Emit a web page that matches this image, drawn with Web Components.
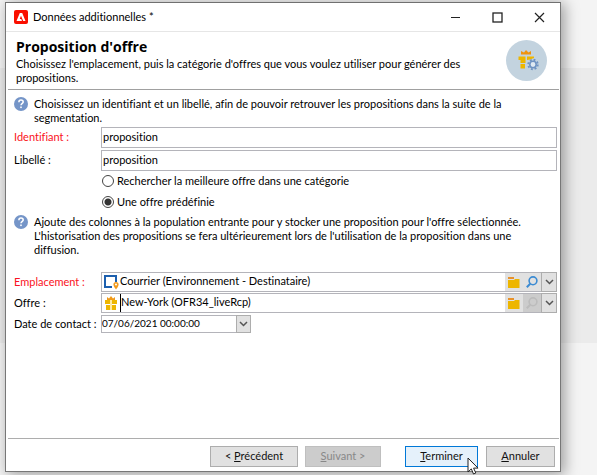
<!DOCTYPE html>
<html lang="fr">
<head>
<meta charset="utf-8">
<title>Données additionnelles</title>
<style>
html,body{margin:0;height:100%}
body{box-sizing:border-box;padding:2px 36px 3px 5px;overflow:hidden;font:11px/14px Lato,"Open Sans",sans-serif;font-variant-ligatures:none;color:#000;
background:linear-gradient(#f4f4f4 68px,#ebebeb 68px,#ebebeb 343px,#f4f4f4 343px)}
</style>
</head>
<body>
<app-window>
  <title-bar slot="bar">Données additionnelles *</title-bar>
  <page-header slot="header" heading="Proposition d'offre">Choisissez l'emplacement, puis la catégorie d'offres que vous voulez utiliser pour générer des<br>propositions.</page-header>
  <help-note>Choisissez un identifiant et un libellé, afin de pouvoir retrouver les propositions dans la suite de la<br>segmentation.</help-note>
  <text-field label="Identifiant :" value="proposition" required></text-field>
  <text-field label="Libellé :" value="proposition"></text-field>
  <offer-choice></offer-choice>
  <help-note class="second">Ajoute des colonnes à la population entrante pour y stocker une proposition pour l'offre sélectionnée.<br>L'historisation des propositions se fera ultérieurement lors de l'utilisation de la proposition dans une<br>diffusion.</help-note>
  <lookup-field label="Emplacement :" value="Courrier (Environnement - Destinataire)" required>
    <svg slot="icon" width="16" height="16" viewBox="0 0 16 16"><path d="M9 13H2V2h11v6" fill="none" stroke="#1c5fae" stroke-width="2"/><path d="M13 8a2.600 2.600 0 0 0-2.600 2.600C10.400 12.500 13 15.500 13 15.500s2.600-3 2.600-4.900A2.600 2.600 0 0 0 13 8Z" fill="#f39a1c"/><circle cx="13" cy="10.500" r="1" fill="#fff"/></svg>
  </lookup-field>
  <lookup-field label="Offre :" value="New-York (OFR34_liveRcp)" nosearch caret>
    <svg slot="icon" width="16" height="16" viewBox="0 0 16 16"><path d="M4 5V2l2 1.500L8 1l2 2.500L12 2v3Z" fill="#f09a1a"/><path d="M2 5h5v4H2ZM9 5h5v4H9ZM3 10h4v5H3ZM9 10h4v5H9Z" fill="#edb600"/><path d="M7 5h2v10H7Z" fill="#ffe9a0"/></svg>
  </lookup-field>
  <date-field label="Date de contact :" value="07/06/2021 00:00:00"></date-field>
  <wizard-buttons slot="footer"></wizard-buttons>
</app-window>

<script>
const define = (name, html, setup) => customElements.define(name, class extends HTMLElement {
  connectedCallback() {
    if (this.shadowRoot) return;
    const t = document.createElement('template');
    t.innerHTML = html;
    this.attachShadow({mode: 'open'}).append(t.content.cloneNode(true));
    if (setup) setup(this, this.shadowRoot);
  }
});
const chevron = '<svg width="9" height="6" viewBox="0 0 9 6"><path d="M1 1l3.500 3.500L8 1" fill="none" stroke="#555" stroke-width="1.500"/></svg>';
const fieldCss = `
:host{display:grid;grid-template-columns:87px 1fr;align-items:center}
:host([required]) label{color:#fa1222}
label{white-space:nowrap}
input{font:inherit;font-variant-ligatures:none;color:inherit;border:0;outline:0;background:none;padding:0;margin:0;min-width:0}
button{font:inherit;padding:0;margin:0;border:0;background:#e1e1e1;display:grid;place-items:center}
.drop{width:15px;border:1px solid #adadad;box-sizing:border-box}`;
const fillField = (el, r) => {
  r.querySelector('label').textContent = el.getAttribute('label');
  r.querySelector('input').setAttribute('value', el.getAttribute('value'));
};

define('app-window', `<style>
:host{display:flex;flex-direction:column;box-sizing:border-box;height:100%;border:1px solid #777;border-top-color:#707070;background:#fff;box-shadow:3px 2px 13px 1px rgba(0,0,0,.34)}
main{flex:1;display:flex;flex-direction:column;padding:7px 3px 0 8px;min-height:0}
::slotted(text-field){margin-bottom:2px}
::slotted(lookup-field){margin-bottom:1px}
::slotted(date-field){margin-top:1px}
::slotted(.second){margin-bottom:13px}
</style><slot name="bar"></slot><slot name="header"></slot><main><slot></slot></main><slot name="footer"></slot>`);

define('title-bar', `<style>
:host{display:flex;align-items:center;height:28px;padding:0 0 0 8px;border-bottom:1px solid #e6e6e6}
h2{font:inherit;font-variant-ligatures:none;margin:0 0 0 5px;flex:1}
button{width:42px;height:26px;padding:0;border:0;background:none;display:grid;place-items:center}
svg{display:block}
</style>
<svg width="14" height="14" viewBox="0 0 14 14"><rect width="14" height="14" rx="2" fill="#fa0f00"/><path d="M5.800 3h2.400L11.500 11H9.200L7 5.700 5.700 8.900h1.500L8 11H2.500Z" fill="#fff"/></svg>
<h2><slot></slot></h2>
<button aria-label="Réduire"><svg width="11" height="11"><path d="M1 5.500h9" stroke="#222"/></svg></button>
<button aria-label="Agrandir"><svg width="11" height="11"><rect x="1" y="1" width="9" height="9" fill="none" stroke="#222" stroke-width="1.300"/></svg></button>
<button aria-label="Fermer"><svg width="11" height="11"><path d="M1 1l9 9M10 1L1 10" stroke="#222" stroke-width="1.200"/></svg></button>`);

define('page-header', `<style>
:host{display:flex;align-items:center;box-sizing:border-box;height:58px;margin:0 1px 0 2px;padding:0 12px 0 8px;border-bottom:1px solid #a0a0a0}
div{flex:1;white-space:nowrap}
h1{font:700 14px/20px "Open Sans",sans-serif;margin:0;color:#000}
p{margin:0}
</style>
<div><h1></h1><p><slot></slot></p></div>
<svg width="41" height="41" viewBox="0 0 41 41"><circle cx="20.500" cy="20.500" r="20.500" fill="#c3d3df"/>
<path d="M15 14.500V11l3 1.500L20 10l2.500 2.500L25 11v3.500Z" fill="#f0930f"/>
<path d="M12.500 16.500h7V19v4h-5v-3h-2ZM14.500 24H19v4.500h-4.500ZM21 16.500h7V18l-4 1.500L21 20Z" fill="#edb600"/>
<circle cx="27" cy="24.500" r="4.800" fill="none" stroke="#6f93c2" stroke-width="1.800" stroke-dasharray="1.900 1.870"/><circle cx="27" cy="24.500" r="3.200" fill="#dfe9f2" stroke="#6f93c2" stroke-width="1.600"/></svg>`,
(el, r) => r.querySelector('h1').textContent = el.getAttribute('heading'));

define('help-note', `<style>
:host{display:flex;gap:6px;padding-bottom:2px}
p{margin:0;white-space:nowrap}
svg{flex:none}
</style><svg width="14" height="14" viewBox="0 0 14 14"><circle cx="7" cy="7" r="7" fill="#7595c8"/><path d="M4.900 5.200C4.900 3.800 5.800 3.100 7 3.100S9.200 3.800 9.200 5 7 6.500 7 8.300" fill="none" stroke="#fff" stroke-width="1.500"/><rect x="6.200" y="9.500" width="1.600" height="1.600" fill="#fff"/></svg><p><slot></slot></p>`);

define('text-field', `<style>${fieldCss}
label{padding-bottom:2px}
input{height:21px;box-sizing:border-box;border:1px solid #b4b4ba;padding:0 1px 2px}
</style><label for="f"></label><input id="f">`, fillField);

define('offer-choice', `<style>
:host{display:flex;flex-direction:column;gap:7px;padding:1px 0 6px 88px}
div{display:flex;align-items:center;gap:3px;height:14px}
input{appearance:none;box-sizing:border-box;width:12px;height:12px;margin:0;border:1px solid #444;border-radius:50%}
input:checked{background:radial-gradient(circle,#333 3px,#fff 4px)}
</style>
<div><input type="radio" name="mode" id="a"><label for="a">Rechercher la meilleure offre dans une catégorie</label></div>
<div><input type="radio" name="mode" id="b" checked><label for="b">Une offre prédéfinie</label></div>`);

define('lookup-field', `<style>${fieldCss}
.box{display:flex;box-sizing:border-box;height:20px;border:1px solid #b4b4ba;border-right:0}
.icon{width:18px;display:grid;place-items:center}
input{flex:1;padding-bottom:2px}
:host([caret]) input{border-left:1px solid #000}
.tool{width:18px}
.tool:disabled{background:#ccc}
.drop{width:16px;margin:-1px 0}
</style><label for="f"></label><div class="box"><span class="icon"><slot name="icon"></slot></span><input id="f">
<button class="tool" aria-label="Parcourir"><svg width="12" height="11" viewBox="0 0 12 11"><path d="M0 0h6v2H0Z" fill="#e8922a"/><path d="M0 3h6l1-1h4.500v9H0Z" fill="#edb600"/></svg></button>
<button class="tool search" aria-label="Rechercher"><svg width="12" height="12" viewBox="0 0 12 12"><g fill="none" stroke="#3c8bd2" stroke-width="1.600"><circle cx="7" cy="4.800" r="3.900"/><path d="M4.200 7.800L.8 11.200" stroke-width="2"/></g></svg></button>
<button class="drop" aria-label="Ouvrir la liste">${chevron}</button></div>`, (el, r) => {
  fillField(el, r);
  if (el.hasAttribute('nosearch')) {
    r.querySelector('.search').disabled = true;
    r.querySelector('.search g').setAttribute('stroke', '#bcbcbc');
  }
});

define('date-field', `<style>${fieldCss}
.box{display:flex;box-sizing:border-box;width:150px;height:18px;border:1px solid #b4b4ba;border-right:0}
input{flex:1;font-size:10px;padding-bottom:2px}
.drop{margin:-1px 0}
</style><label for="f"></label><div class="box"><input id="f"><button class="drop" aria-label="Ouvrir le calendrier">${chevron}</button></div>`, fillField);

define('wizard-buttons', `<style>
:host{display:flex;justify-content:flex-end;box-sizing:border-box;height:33px;margin:0 1px 0 2px;padding:7px 4px 4px;border-top:1px solid #adadad;gap:7px}
button{position:relative;box-sizing:border-box;height:21px;padding:0 0 1px;border:1px solid #adadad;background:#e1e1e1;font:inherit;color:#111}
.prev{width:88px}.next{width:76px}.end{width:73px;margin-left:17px}.cancel{width:69px;margin-left:1px}
.next:disabled{background:#ccc;border-color:#bfbfbf;color:#888}
.end{border-color:#0078d7;background:#e5f1fb}
svg{position:absolute;left:61px;top:10px;z-index:1}
</style>
<button class="prev">&lt; <u>P</u>récédent</button><button class="next" disabled><u>S</u>uivant &gt;</button>
<button class="end"><u>T</u>erminer<svg width="12" height="19" viewBox="0 0 12 19"><path d="M1 1v14l3.300-3.100L6.500 17l2.300-1-2.200-4.900H11Z" fill="#fff" stroke="#222"/></svg></button>
<button class="cancel"><u>A</u>nnuler</button>`);
</script>
</body>
</html>
